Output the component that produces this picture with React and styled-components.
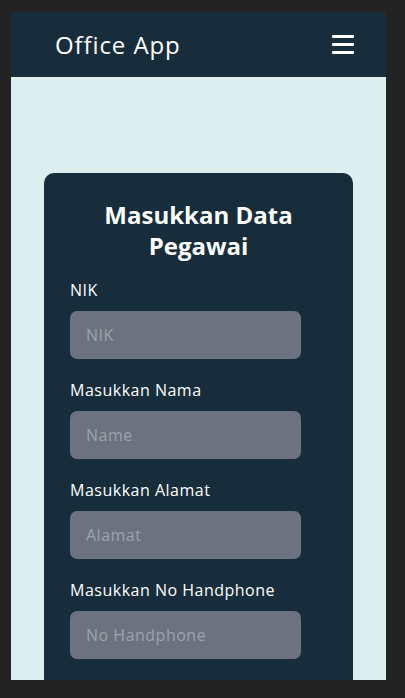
import React from "react";
import styled, { createGlobalStyle } from "styled-components";

const GlobalStyle = createGlobalStyle`
  * {
    box-sizing: border-box;
  }

  body {
    margin: 0;
    background-color: #232323;
    font-family: "Open Sans", "Liberation Sans", sans-serif;
  }
`;

const Screen = styled.div`
  width: 375px;
  height: 668px;
  margin: 12px 0 0 11px;
  background-color: #ddeeef;
  overflow: hidden;
`;

const Header = styled.header`
  height: 65px;
  padding: 0 32px 0 44px;
  background-color: #172d3b;
  display: flex;
  align-items: center;
  justify-content: space-between;

  h1 {
    margin: 0;
    color: #ffffff;
    font-size: 24px;
    font-weight: 400;
    letter-spacing: 0.9px;
  }
`;

const MenuButton = styled.button`
  width: 22px;
  height: 20px;
  padding: 0;
  border: none;
  background: none;
  display: flex;
  flex-direction: column;
  justify-content: center;
  gap: 5px;

  span {
    display: block;
    height: 3px;
    border-radius: 1px;
    background-color: #ffffff;
  }
`;

const Main = styled.main`
  padding: 96px 33px 0;
`;

const Card = styled.section`
  background-color: #172d3b;
  border-radius: 10px;
  padding: 26px 26px 40px;

  h2 {
    margin: 0 0 18px;
    color: #ffffff;
    font-size: 24px;
    line-height: 31px;
    font-weight: 700;
    text-align: center;
  }
`;

const Field = styled.div`
  display: flex;
  flex-direction: column;
  margin-bottom: 20px;

  label {
    color: #ffffff;
    font-size: 16px;
    font-weight: 500;
    line-height: 22px;
    letter-spacing: 0.5px;
    margin-bottom: 10px;
  }

  input {
    width: 231px;
    height: 48px;
    padding: 0 16px;
    border: none;
    border-radius: 7px;
    background-color: #6c7280;
    color: #ffffff;
    font-family: inherit;
    font-size: 16px;
    letter-spacing: 0.5px;
    outline: none;
  }

  input::placeholder {
    color: #9ca2ad;
  }
`;

const fields = [
  { label: "NIK", placeholder: "NIK" },
  { label: "Masukkan Nama", placeholder: "Name" },
  { label: "Masukkan Alamat", placeholder: "Alamat" },
  { label: "Masukkan No Handphone", placeholder: "No Handphone" },
];

export default function App() {
  return (
    <>
      <GlobalStyle />
      <Screen>
        <Header>
          <h1>Office App</h1>
          <MenuButton aria-label="menu">
            <span />
            <span />
            <span />
          </MenuButton>
        </Header>
        <Main>
          <Card>
            <h2>
              Masukkan Data
              <br />
              Pegawai
            </h2>
            {fields.map((f) => (
              <Field key={f.label}>
                <label>{f.label}</label>
                <input type="text" placeholder={f.placeholder} />
              </Field>
            ))}
          </Card>
        </Main>
      </Screen>
    </>
  );
}
